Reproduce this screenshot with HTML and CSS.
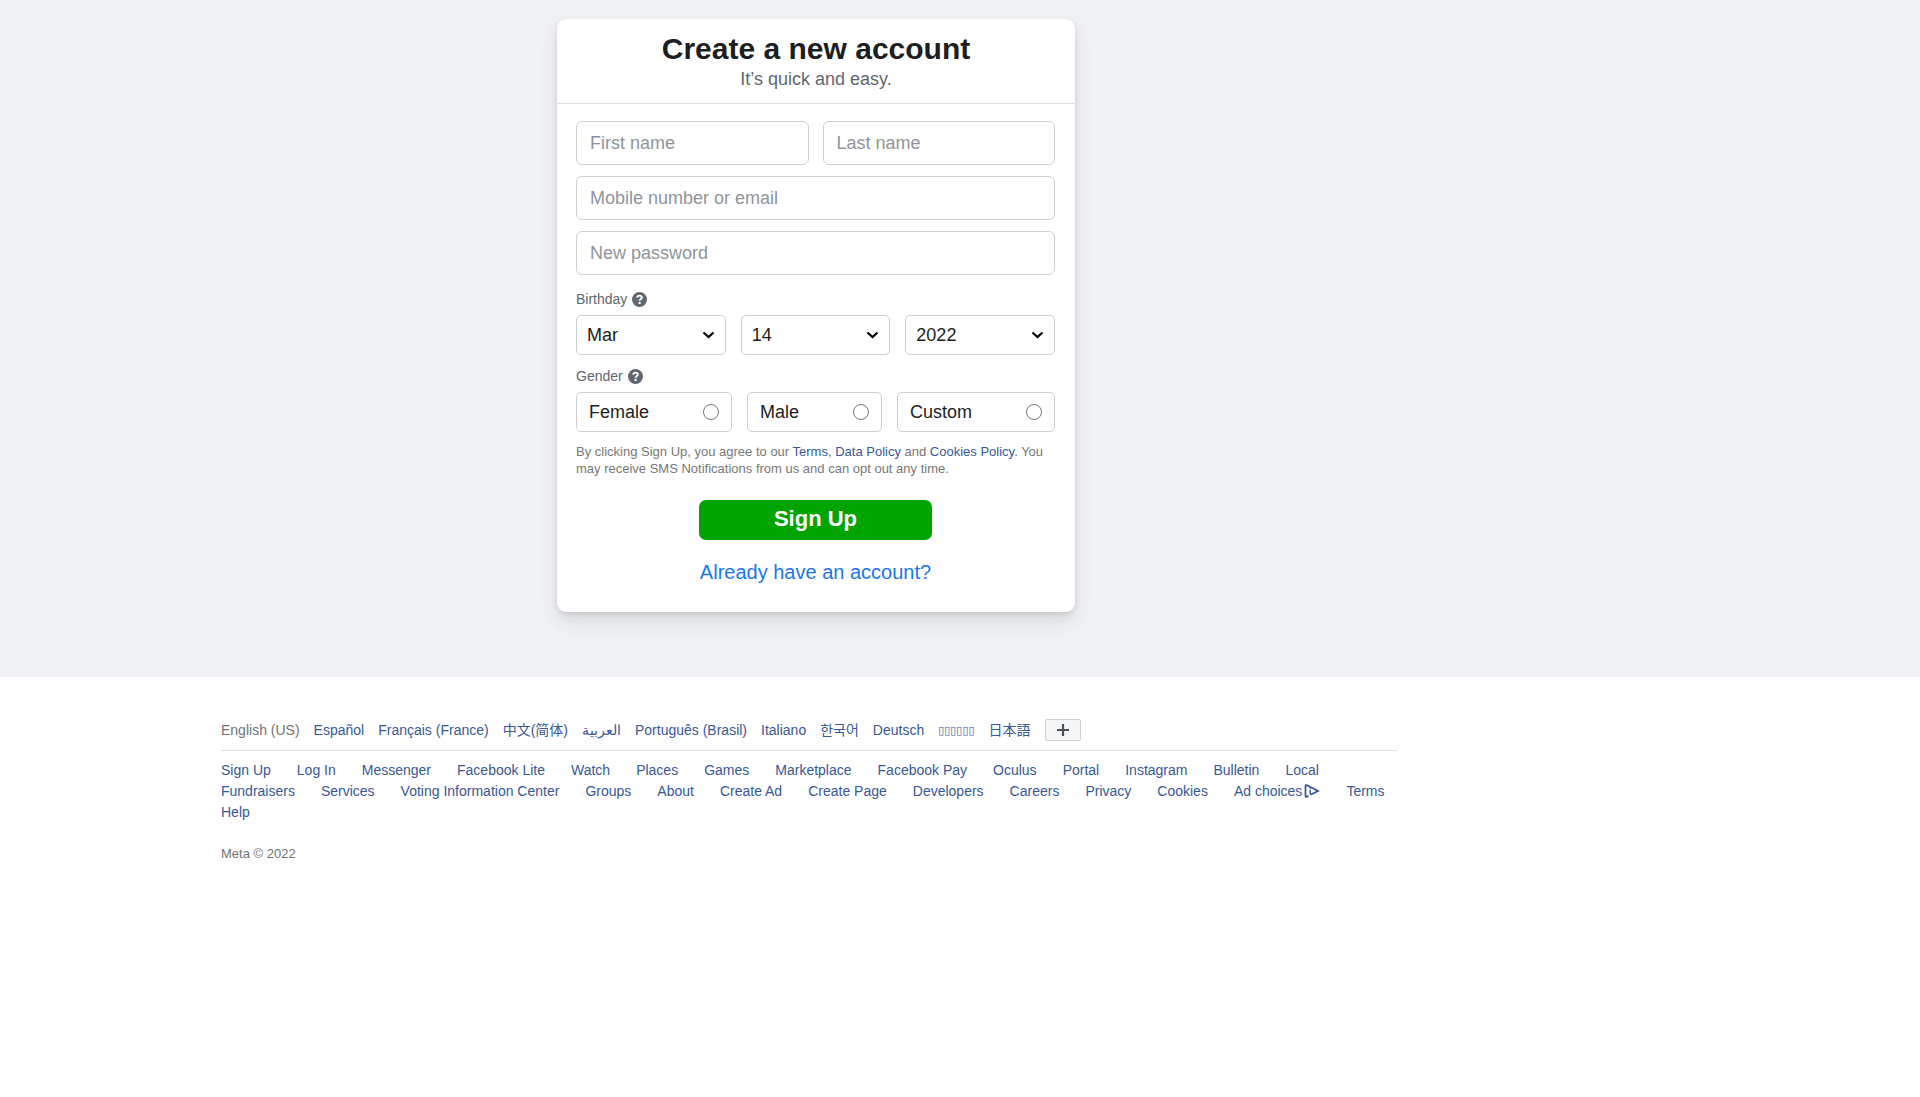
FILE: index.html
```html
<!DOCTYPE html>
<html lang="en">
<head>
<meta charset="UTF-8" />
<meta name="viewport" content="width=device-width, initial-scale=1" />
<title>Sign Up for Facebook</title>
<link rel="stylesheet" href="styles.css">
</head>
<body>

<main class="content">
  <div class="column">
    <div class="card">
      <div class="card-header">
        <h1>Create a new account</h1>
        <p>It’s quick and easy.</p>
      </div>

      <form class="signup-form">
        <div class="row names">
          <input class="text-input" type="text" aria-label="First name" placeholder="First name" />
          <input class="text-input" type="text" aria-label="Last name" placeholder="Last name" />
        </div>
        <input class="text-input" type="text" aria-label="Mobile number or email" placeholder="Mobile number or email" />
        <input class="text-input" type="password" aria-label="New password" placeholder="New password" />

        <fieldset class="birthday">
          <legend>Birthday
            <svg class="help" viewBox="0 0 14 14"><circle cx="7" cy="7" r="7" fill="#606770"/><path d="M4.8 5.3C4.9 3.9 5.8 3.3 7 3.3s2.2.7 2.2 1.8C9.2 6.5 7.1 6.4 7.1 8.2" fill="none" stroke="#fff" stroke-width="1.7"/><circle cx="7.1" cy="10.2" r="1.1" fill="#fff"/></svg>
          </legend>
          <div class="row">
            <div class="select">
              <select aria-label="Month"><option>Jan</option><option>Feb</option><option selected>Mar</option><option>Apr</option></select>
              <svg class="chevron" viewBox="0 0 12 8"><path d="M1 1.5l5 4.5 5-4.5" fill="none" stroke="#000" stroke-width="2.2"/></svg>
            </div>
            <div class="select">
              <select aria-label="Day"><option>13</option><option selected>14</option><option>15</option></select>
              <svg class="chevron" viewBox="0 0 12 8"><path d="M1 1.5l5 4.5 5-4.5" fill="none" stroke="#000" stroke-width="2.2"/></svg>
            </div>
            <div class="select">
              <select aria-label="Year"><option selected>2022</option><option>2021</option><option>2020</option></select>
              <svg class="chevron" viewBox="0 0 12 8"><path d="M1 1.5l5 4.5 5-4.5" fill="none" stroke="#000" stroke-width="2.2"/></svg>
            </div>
          </div>
        </fieldset>

        <fieldset>
          <legend>Gender
            <svg class="help" viewBox="0 0 14 14"><circle cx="7" cy="7" r="7" fill="#606770"/><path d="M4.8 5.3C4.9 3.9 5.8 3.3 7 3.3s2.2.7 2.2 1.8C9.2 6.5 7.1 6.4 7.1 8.2" fill="none" stroke="#fff" stroke-width="1.7"/><circle cx="7.1" cy="10.2" r="1.1" fill="#fff"/></svg>
          </legend>
          <div class="row">
            <label class="radio">Female <input type="radio" name="sex" value="1" /></label>
            <label class="radio">Male <input type="radio" name="sex" value="2" /></label>
            <label class="radio">Custom <input type="radio" name="sex" value="-1" /></label>
          </div>
        </fieldset>

        <p class="terms">By clicking Sign Up, you agree to our <a href="#">Terms</a>, <a href="#">Data Policy</a> and <a href="#">Cookies Policy</a>. You may receive SMS Notifications from us and can opt out any time.</p>

        <button type="submit" class="signup-btn">Sign Up</button>
        <a class="login-link" href="#">Already have an account?</a>
      </form>
    </div>
  </div>
</main>

<footer class="footer">
  <div class="footer-inner">
    <ul class="languages">
      <li>English (US)</li>
      <li><a href="#">Español</a></li>
      <li><a href="#">Français (France)</a></li>
      <li><a href="#" lang="zh-CN">中文(简体)</a></li>
      <li><a href="#" lang="ar" dir="rtl">العربية</a></li>
      <li><a href="#">Português (Brasil)</a></li>
      <li><a href="#">Italiano</a></li>
      <li><a href="#" lang="ko">한국어</a></li>
      <li><a href="#">Deutsch</a></li>
      <li><a href="#" class="boxes">▯▯▯▯▯▯</a></li>
      <li><a href="#" lang="ja">日本語</a></li>
      <li>
        <button type="button" class="more-btn" aria-label="Show more languages">
          <svg viewBox="0 0 12 12"><path d="M6 0v12M0 6h12" stroke="#4b4f56" stroke-width="2.2"/></svg>
        </button>
      </li>
    </ul>

    <ul class="links">
      <li><a href="#">Sign Up</a></li>
      <li><a href="#">Log In</a></li>
      <li><a href="#">Messenger</a></li>
      <li><a href="#">Facebook Lite</a></li>
      <li><a href="#">Watch</a></li>
      <li><a href="#">Places</a></li>
      <li><a href="#">Games</a></li>
      <li><a href="#">Marketplace</a></li>
      <li><a href="#">Facebook Pay</a></li>
      <li><a href="#">Oculus</a></li>
      <li><a href="#">Portal</a></li>
      <li><a href="#">Instagram</a></li>
      <li><a href="#">Bulletin</a></li>
      <li><a href="#">Local</a></li>
      <li><a href="#">Fundraisers</a></li>
      <li><a href="#">Services</a></li>
      <li><a href="#">Voting Information Center</a></li>
      <li><a href="#">Groups</a></li>
      <li><a href="#">About</a></li>
      <li><a href="#">Create Ad</a></li>
      <li><a href="#">Create Page</a></li>
      <li><a href="#">Developers</a></li>
      <li><a href="#">Careers</a></li>
      <li><a href="#">Privacy</a></li>
      <li><a href="#">Cookies</a></li>
      <li><a href="#">Ad choices<svg class="adchoices" viewBox="0 0 16 14"><path d="M4.5 11.8L3 12.7Q1.500 13.300 1.500 12V2Q1.500.700 3 1.300L14 7 6.500 10.800" fill="none" stroke="#385898" stroke-width="1.8"/><path d="M6.200 5.700v4.500M6.200 3.500v1.300" stroke="#385898" stroke-width="1.5"/></svg></a></li>
      <li><a href="#">Terms</a></li>
      <li><a href="#">Help</a></li>
    </ul>

    <p class="copyright">Meta © 2022</p>
  </div>
</footer>

</body>
</html>
```
FILE: styles.css
```css
* {
  box-sizing: border-box;
}

body {
  margin: 0;
  font-family: "Liberation Sans", Arial, "Noto Sans CJK SC", sans-serif;
  font-size: 14px;
  line-height: 21px;
  color: #1c1e21;
  background: #fff;
}

a {
  color: #385898;
  text-decoration: none;
}
a:hover { text-decoration: underline; }

h1, p, ul, fieldset, legend {
  margin: 0;
  padding: 0;
}

.content {
  background: #f0f2f5;
  padding: 19px 0 65px;
}

.column {
  width: 85%;
}

.card {
  max-width: 518px;
  margin: 0 auto;
  background: #fff;
  border-radius: 9px;
  box-shadow: 0 2px 5px rgba(0,0,0,0.1), 0 10px 20px rgba(0,0,0,0.1);
}

.card-header {
  padding: 11px 20px 12px;
  text-align: center;
  border-bottom: 1px solid #dadde1;
}
.card-header h1 {
  font-size: 30px;
  line-height: 37px;
}
.card-header p {
  font-size: 18px;
  line-height: 24px;
  color: #606770;
}

.signup-form {
  display: flex;
  flex-direction: column;
  gap: 11px;
  padding: 17px 20px 27px 19px;
}

.row {
  display: flex;
  gap: 15px;
}
.names { gap: 14px; }

.text-input {
  width: 100%;
  height: 44px;
  padding: 0 13px;
  font-family: inherit;
  font-size: 18px;
  color: #1c1e21;
  border: 1px solid #ccd0d5;
  border-radius: 6px;
}
.text-input::placeholder { color: #90949c; }

fieldset {
  border: none;
  min-width: 0;
}
.birthday { margin-top: 3px; }

legend {
  display: flex;
  align-items: center;
  gap: 5px;
  padding-bottom: 5px;
  color: #606770;
}

.help {
  width: 15px;
  height: 15px;
}

.select {
  flex: 1;
  position: relative;
}
.select select {
  appearance: none;
  width: 100%;
  height: 40px;
  padding: 0 10px;
  font-family: inherit;
  font-size: 18px;
  color: #1c1e21;
  background: #fff;
  border: 1px solid #ccd0d5;
  border-radius: 5px;
  display: block;
}
.chevron {
  position: absolute;
  right: 11px;
  top: 16px;
  width: 13px;
  height: 8px;
  pointer-events: none;
}

.radio {
  flex: 1 1 auto;
  display: flex;
  align-items: center;
  justify-content: space-between;
  height: 40px;
  padding: 0 12px;
  font-size: 18px;
  border: 1px solid #ccd0d5;
  border-radius: 5px;
}
.radio input {
  width: 16px;
  height: 16px;
  margin: 0;
}

.terms {
  font-size: 13px;
  line-height: 17px;
  color: #777;
}

.signup-btn {
  align-self: center;
  width: 233px;
  height: 40px;
  margin-top: 12px;
  padding: 0 0 3px;
  font-family: inherit;
  font-size: 22px;
  font-weight: bold;
  color: #fff;
  background: #00a400;
  border: none;
  border-radius: 7px;
  cursor: pointer;
}

.login-link {
  align-self: center;
  margin-top: 8px;
  font-size: 20px;
  line-height: 26px;
  color: #1877f2;
}

.footer {
  width: 85%;
  padding: 42px 14px 24px 0;
}
.footer-inner {
  max-width: 1176px;
  margin: 0 auto;
}

.languages, .links {
  display: flex;
  flex-wrap: wrap;
  list-style: none;
}

.languages {
  gap: 0 14px;
  align-items: center;
  padding-bottom: 9px;
  border-bottom: 1px solid #dddfe2;
  color: #737373;
}

.boxes {
  font-family: "DejaVu Sans", sans-serif;
  font-size: 11px;
}

.more-btn {
  display: flex;
  align-items: center;
  justify-content: center;
  width: 36px;
  height: 22px;
  padding: 0;
  background: #f5f6f7;
  border: 1px solid #ccd0d5;
  border-radius: 2px;
}
.more-btn svg {
  width: 12px;
  height: 12px;
}

.links {
  gap: 0 26px;
  padding-top: 9px;
}

.adchoices {
  width: 16px;
  height: 14px;
  margin-left: 2px;
  vertical-align: -2px;
}

.copyright {
  margin-top: 20px;
  font-size: 13px;
  color: #737373;
}
```
